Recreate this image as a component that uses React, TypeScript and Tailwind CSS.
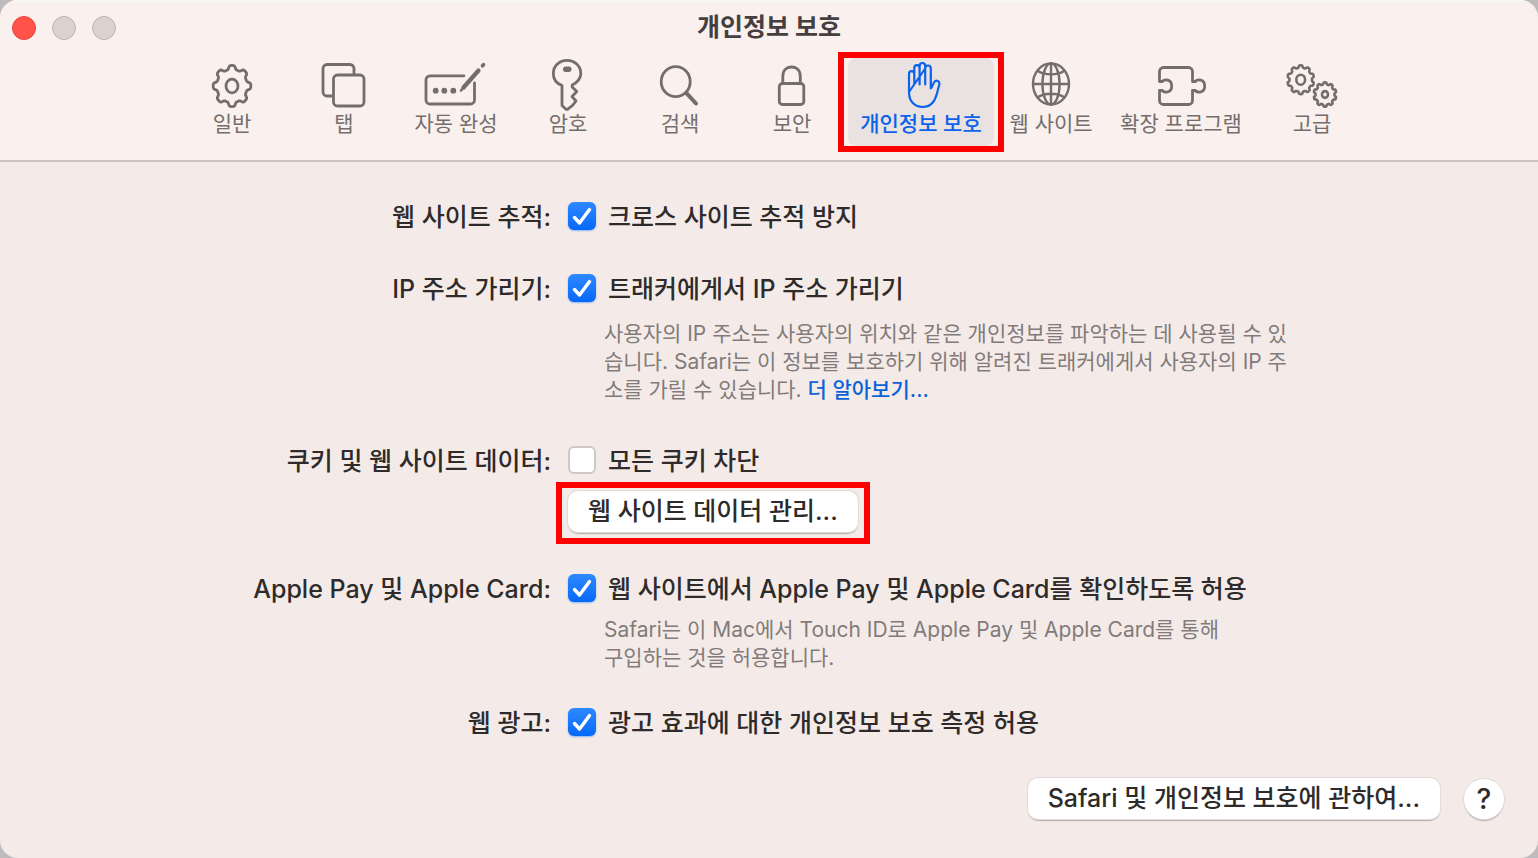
import { useState, type ReactNode } from "react";

function gearPath(cx: number, cy: number, rx: number, ry: number, teeth: number, depth: number) {
  const steps = teeth * 20;
  let d = "";
  for (let i = 0; i < steps; i++) {
    const a = (i / steps) * Math.PI * 2;
    const wave = Math.tanh(2.2 * Math.cos(teeth * a)) / Math.tanh(2.2);
    const k = 1 - (depth * (1 - wave)) / 2;
    const x = cx + rx * k * Math.sin(a);
    const y = cy - ry * k * Math.cos(a);
    d += `${i === 0 ? "M" : "L"}${x.toFixed(2)} ${y.toFixed(2)}`;
  }
  return d + "Z";
}

function Icon({ children }: { children: ReactNode }) {
  return (
    <svg
      aria-hidden="true"
      viewBox="0 0 64 52"
      className="h-[52px] w-16 overflow-visible"
      fill="none"
      stroke="currentColor"
      strokeWidth="2.8"
      strokeLinecap="round"
      strokeLinejoin="round"
    >
      {children}
    </svg>
  );
}

const GeneralIcon = () => (
  <Icon>
    <path d={gearPath(32, 28, 18.8, 20.6, 8, 0.19)} />
    <ellipse cx="32" cy="28" rx="6" ry="6.8" />
  </Icon>
);

const TabsIcon = () => (
  <Icon>
    <path d="M42 15.500V10.500a4 4 0 0 0-4-4H15a4 4 0 0 0-4 4V34a4 4 0 0 0 4 4H19.500" />
    <rect x="21.500" y="17" width="30.500" height="31" rx="4" />
  </Icon>
);

const AutofillIcon = () => (
  <Icon>
    <path d="M40 17.800H6a4 4 0 0 0-4 4V42a4 4 0 0 0 4 4H46.500a4 4 0 0 0 4-4V25" />
    <path d="M39.500 29.500 54.500 12.500" strokeWidth="4.200" />
    <path d="M37 32.500 39.500 29.500" strokeWidth="2.600" />
    <path d="M58.500 7.800 59.500 6.700" strokeWidth="3.600" />
    <g fill="currentColor" stroke="none">
      <circle cx="11.700" cy="32.700" r="2.900" />
      <circle cx="20.300" cy="32.700" r="2.900" />
      <circle cx="29.300" cy="32.700" r="2.900" />
    </g>
  </Icon>
);

const KeyIcon = () => (
  <Icon>
    <path d="M26 27.500C20.500 25.500 17.300 21 17.300 15.500 17.300 8 23.500 2.300 31 2.300S44.800 8 44.800 15.500C44.800 20.500 41 24.500 36.200 27V29L40.800 33.500 36 38.500 40 43 36.800 47.200 31.500 51.300H30L26 47.500Z" />
    <rect x="27" y="8.500" width="8.500" height="5.500" rx="2.700" fill="currentColor" stroke="none" />
  </Icon>
);

const SearchIcon = () => (
  <Icon>
    <ellipse cx="27.700" cy="23.700" rx="14.500" ry="15" />
    <path d="M38.200 34.800 48 45.500" strokeWidth="4" />
  </Icon>
);

const SecurityIcon = () => (
  <Icon>
    <rect x="19.300" y="25.500" width="24.500" height="21" rx="3" />
    <path d="M22.800 25V18.500C22.800 12.500 26.500 9 31.600 9S40.300 12.500 40.300 18.500V25" />
  </Icon>
);

const PrivacyIcon = () => (
  <Icon>
    <path
      strokeWidth="2.200"
      d="M20 34V16C20 12.200 25.300 12.200 25.300 16V26.500M25.300 16V10C25.300 6.200 30.600 6.200 30.600 10V26.500M30.600 10V8C30.600 4 36.200 4 36.200 8V26.500M36.200 10.500C36.200 6.500 41.800 6.500 41.800 10.500V30.500C43 30 44 25.800 45.200 24.200 47 21.500 51 22.700 50.300 26.500L47.800 36C45.600 44.500 41.500 49 33.800 49 25.500 49 20 43.500 20 34Z"
    />
  </Icon>
);

const WebsitesIcon = () => (
  <Icon>
    <g strokeWidth="2.400">
      <ellipse cx="32" cy="26" rx="18" ry="20.600" />
      <ellipse cx="32" cy="26" rx="8.600" ry="20.600" />
      <path d="M32 5.400V46.600M14 26H50M18.500 12.700C25.500 17.500 38.500 17.500 45.500 12.700M18.500 39.300C25.500 34.500 38.500 34.500 45.500 39.300" />
    </g>
  </Icon>
);

const ExtensionsIcon = () => (
  <Icon>
    <path d="M10.500 23.500V13.500a4 4 0 0 1 4-4H39.500a4 4 0 0 1 4 4V23.500H46.300C48.500 20.800 55.700 21 55.700 28S48.500 35.200 46.300 32.500H43.500V42.500a4 4 0 0 1-4 4H14.500a4 4 0 0 1-4-4V32.500H13.300C15.500 35.200 22.700 35 22.700 28S15.500 20.800 13.300 23.500Z" />
  </Icon>
);

const AdvancedIcon = () => (
  <Icon>
    <g strokeWidth="2.600">
      <path d={gearPath(20.7, 21.7, 13.4, 14.4, 10, 0.16)} />
      <ellipse cx="20.700" cy="21.700" rx="4.400" ry="5" />
      <path d={gearPath(45, 36.5, 11.4, 12.2, 10, 0.17)} />
      <ellipse cx="45" cy="36.500" rx="3" ry="3.400" />
    </g>
  </Icon>
);

const tabs = [
  { label: "일반", Glyph: GeneralIcon, width: "w-28" },
  { label: "탭", Glyph: TabsIcon, width: "w-28" },
  { label: "자동 완성", Glyph: AutofillIcon, width: "w-28" },
  { label: "암호", Glyph: KeyIcon, width: "w-28" },
  { label: "검색", Glyph: SearchIcon, width: "w-28" },
  { label: "보안", Glyph: SecurityIcon, width: "w-28" },
  { label: "개인정보 보호", Glyph: PrivacyIcon, width: "w-[146px]", active: true },
  { label: "웹 사이트", Glyph: WebsitesIcon, width: "w-[114px]" },
  { label: "확장 프로그램", Glyph: ExtensionsIcon, width: "w-[146px]" },
  { label: "고급", Glyph: AdvancedIcon, width: "w-[116px]" },
];

function CheckRow({ id, label, initial }: { id: string; label: string; initial: boolean }) {
  const [on, setOn] = useState(initial);
  return (
    <div className="flex h-8 items-center gap-3">
      <span className="grid size-7 shrink-0">
        <input
          id={id}
          type="checkbox"
          checked={on}
          onChange={(e) => setOn(e.target.checked)}
          className="col-start-1 row-start-1 size-7 appearance-none rounded-md border-2 border-[#cfc8c6] bg-white checked:border-0 checked:bg-linear-to-b checked:from-[#2d89ff] checked:to-[#0468f8] checked:shadow-[0_1px_2px_#8fb4ee]"
        />
        {on && (
          <svg
            aria-hidden="true"
            viewBox="0 0 28 28"
            className="pointer-events-none col-start-1 row-start-1 size-7"
            fill="none"
            stroke="white"
            strokeWidth="3.4"
            strokeLinecap="round"
            strokeLinejoin="round"
          >
            <path d="M6.500 15.500 11.500 21 21.500 7.500" />
          </svg>
        )}
      </span>
      <label htmlFor={id} className="pt-[2px] leading-8 whitespace-nowrap">
        {label}
      </label>
    </div>
  );
}

function Row({ title, className, children }: { title: string; className: string; children: ReactNode }) {
  return (
    <div role="group" aria-label={title} className={`grid grid-cols-[551fr_970fr] gap-x-[17px] ${className}`}>
      <div className="pt-px text-right leading-8 whitespace-nowrap">{title}</div>
      <div>{children}</div>
    </div>
  );
}

const pushButton =
  "h-[41px] rounded-[10px] bg-white px-5 whitespace-nowrap shadow-[0_0_0_1px_#e3dbd9,0_2px_1px_#b3abaa]";

export default function App() {
  return (
    <div className="min-h-screen bg-[#bdbbbb] font-['Inter','Noto_Sans_CJK_KR',sans-serif] text-[25px] font-medium text-[#2e2b2a]">
      <div className="flex min-h-screen flex-col overflow-hidden rounded-[18px] bg-[#f4ebe9]">
        <header className="border-b-2 border-[#cdc4c2] bg-[#faf0ee] pb-[14px] shadow-[inset_0_2px_0_#faf6f4]">
          <div className="grid h-[52px] grid-cols-[1fr_auto_1fr] items-center">
            <div className="flex gap-4 pt-1 pl-3">
              <button aria-label="닫기" className="size-6 rounded-full border border-[#e2453f] bg-[#ff5249]" />
              <button aria-label="최소화" className="size-6 rounded-full border border-[#bfb6b4] bg-[#dbd2d0]" />
              <button aria-label="확대" className="size-6 rounded-full border border-[#bfb6b4] bg-[#dbd2d0]" />
            </div>
            <h1 className="pt-px leading-8 font-bold text-[#45403f]">개인정보 보호</h1>
          </div>
          <nav className="mt-[6px] flex justify-center pl-2 text-[21px] font-normal text-[#736e6c]">
            {tabs.map(({ label, Glyph, width, active }) => (
              <button
                key={label}
                aria-pressed={!!active}
                className={`relative flex h-[88px] flex-col items-center rounded-lg ${width} ${
                  active ? "bg-[#eae2e0] font-medium text-[#0a63ea]" : ""
                }`}
              >
                <Glyph />
                <span className="leading-7 whitespace-nowrap">{label}</span>
                {active && (
                  <span className="pointer-events-none absolute -inset-x-[10px] -inset-y-[6px] border-6 border-[#ff0000]" />
                )}
              </button>
            ))}
          </nav>
        </header>

        <main className="flex grow flex-col pt-[38px]">
          <Row title="웹 사이트 추적:" className="">
            <CheckRow id="tracking" label="크로스 사이트 추적 방지" initial />
          </Row>

          <Row title="IP 주소 가리기:" className="mt-[39px]">
            <CheckRow id="hide-ip" label="트래커에게서 IP 주소 가리기" initial />
            <p className="mt-4 pl-9 text-[21px] leading-7 font-normal text-[#827b79]">
              사용자의 IP 주소는 사용자의 위치와 같은 개인정보를 파악하는 데 사용될 수 있
              <br />
              습니다. Safari는 이 정보를 보호하기 위해 알려진 트래커에게서 사용자의 IP 주
              <br />
              소를 가릴 수 있습니다.{" "}
              <a href="#more" className="font-medium text-[#0a63d8]">
                더 알아보기...
              </a>
            </p>
          </Row>

          <Row title="쿠키 및 웹 사이트 데이터:" className="mt-10">
            <CheckRow id="cookies" label="모든 쿠키 차단" initial={false} />
            <div className="relative mt-[15px] w-fit">
              <button className={pushButton}>웹 사이트 데이터 관리...</button>
              <span className="pointer-events-none absolute -inset-x-3 -top-[9px] -bottom-3 border-6 border-[#ff0000]" />
            </div>
          </Row>

          <Row title="Apple Pay 및 Apple Card:" className="mt-10">
            <CheckRow id="apple-pay" label="웹 사이트에서 Apple Pay 및 Apple Card를 확인하도록 허용" initial />
            <p className="mt-3 pl-9 text-[21px] leading-7 font-normal text-[#827b79]">
              Safari는 이 Mac에서 Touch ID로 Apple Pay 및 Apple Card를 통해
              <br />
              구입하는 것을 허용합니다.
            </p>
          </Row>

          <Row title="웹 광고:" className="mt-[34px]">
            <CheckRow id="web-ads" label="광고 효과에 대한 개인정보 보호 측정 허용" initial />
          </Row>

          <footer className="mt-auto flex items-center justify-end gap-6 pr-[34px] pb-[39px]">
            <button className={pushButton}>Safari 및 개인정보 보호에 관하여...</button>
            <button
              aria-label="도움말"
              className="size-10 rounded-full bg-white text-[28px] leading-10 shadow-[0_0_0_1px_#e3dbd9,0_2px_1px_#b3abaa]"
            >
              ?
            </button>
          </footer>
        </main>
      </div>
    </div>
  );
}
